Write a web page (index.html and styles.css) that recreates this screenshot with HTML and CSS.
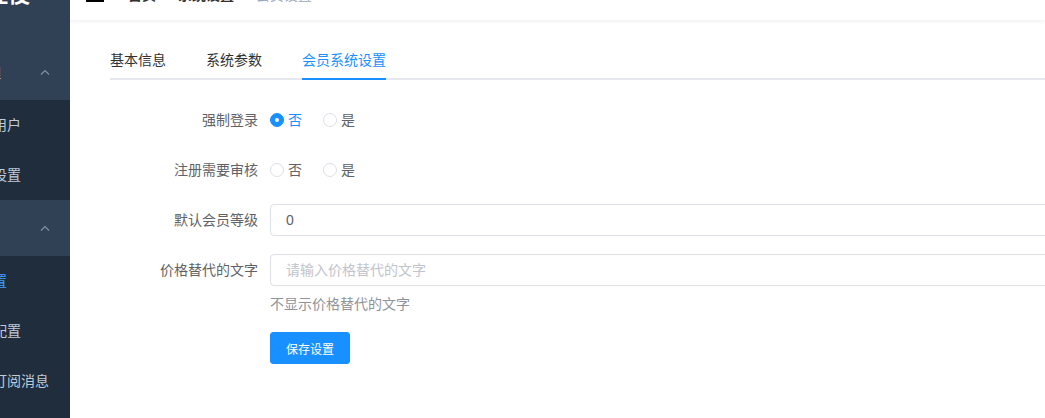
FILE: index.html
```html
<!DOCTYPE html>
<html lang="zh-CN">
<head>
<meta charset="utf-8">
<title>会员系统设置</title>
<link rel="stylesheet" href="styles.css">
</head>
<body>
<div class="layout">
  <aside class="sidebar">
    <div class="sidebar-inner">
      <div class="logo">商城管理後</div>
      <div class="submenu">
        <div class="submenu-title"><span>会员用户管理</span>
          <svg class="arrow" width="10" height="6" viewBox="0 0 10 6"><polyline points="1,5.5 5,1.5 9,5.5" fill="none" stroke="#8290a3" stroke-width="1.2"/></svg>
        </div>
        <ul class="menu">
          <li>系统管理员用户</li>
          <li>公众号菜单设置</li>
        </ul>
      </div>
      <div class="submenu">
        <div class="submenu-title"><span>系统设置</span>
          <svg class="arrow" width="10" height="6" viewBox="0 0 10 6"><polyline points="1,5.5 5,1.5 9,5.5" fill="none" stroke="#8290a3" stroke-width="1.2"/></svg>
        </div>
        <ul class="menu">
          <li class="active">会员系统设置</li>
          <li>微信公众号配置</li>
          <li>微信小程序订阅消息</li>
          <li>短信通知设置</li>
        </ul>
      </div>
    </div>
  </aside>
  <main class="main">
    <header class="navbar">
      <div class="hamburger">
        <svg width="20" height="20" viewBox="0 0 20 20"><rect x="1" y="3" width="18" height="2" fill="#000"/><rect x="1" y="9" width="18" height="2" fill="#000"/><rect x="1" y="15" width="18" height="2" fill="#000"/></svg>
      </div>
      <nav class="breadcrumb">
        <a class="crumb-link">首页</a><span class="sep">/</span><a class="crumb-link">系统设置</a><span class="sep">/</span><span class="crumb-current">会员设置</span>
      </nav>
    </header>
    <section class="app-main">
      <div class="tabs-header">
        <div class="tab"><span class="tab-label">基本信息</span></div>
        <div class="tab"><span class="tab-label">系统参数</span></div>
        <div class="tab active"><span class="tab-label">会员系统设置</span></div>
      </div>
      <form class="form">
        <div class="form-item">
          <label class="form-label">强制登录</label>
          <div class="form-content row">
            <span class="radio checked"><span class="radio-inner"></span><span class="radio-label">否</span></span>
            <span class="radio"><span class="radio-inner"></span><span class="radio-label">是</span></span>
          </div>
        </div>
        <div class="form-item">
          <label class="form-label">注册需要审核</label>
          <div class="form-content row">
            <span class="radio"><span class="radio-inner"></span><span class="radio-label">否</span></span>
            <span class="radio"><span class="radio-inner"></span><span class="radio-label">是</span></span>
          </div>
        </div>
        <div class="form-item">
          <label class="form-label">默认会员等级</label>
          <div class="form-content">
            <input class="input" type="text" value="0">
          </div>
        </div>
        <div class="form-item">
          <label class="form-label">价格替代的文字</label>
          <div class="form-content">
            <input class="input" type="text" placeholder="请输入价格替代的文字">
            <div class="help">不显示价格替代的文字</div>
          </div>
        </div>
        <div class="form-item">
          <div class="form-label"></div>
          <div class="form-content">
            <button type="button" class="btn-primary">保存设置</button>
          </div>
        </div>
      </form>
    </section>
  </main>
</div>
</body>
</html>
```
FILE: styles.css
```css
html, body {
  margin: 0;
  padding: 0;
  background: #fff;
  overflow: hidden;
}
body {
  font-family: "Liberation Sans", "Noto Sans CJK SC", sans-serif;
  -webkit-font-smoothing: antialiased;
}
.layout {
  display: flex;
  height: 418px;
}

/* sidebar */
.sidebar {
  width: 70px;
  flex: none;
  background: #304156;
  overflow: hidden;
}
.sidebar-inner {
  width: 200px;
  margin-left: -130px;
  margin-top: -30px;
}
.logo {
  height: 74px;
  line-height: 50px;
  box-sizing: border-box;
  text-align: right;
  padding-right: 40px;
  color: #fff;
  font-weight: 700;
  font-size: 22px;
  white-space: nowrap;
}
.submenu-title {
  height: 56px;
  display: flex;
  align-items: center;
  justify-content: space-between;
  padding: 0 20px 0 47px;
  color: #bfcbd9;
  font-size: 14px;
  white-space: nowrap;
}
.menu {
  list-style: none;
  margin: 0;
  padding: 0;
  background: #1f2d3d;
}
.menu li {
  height: 50px;
  line-height: 50px;
  padding-left: 53px;
  color: #bfcbd9;
  font-size: 14px;
  white-space: nowrap;
}
.menu li.active {
  color: #409eff;
}

/* main */
.main {
  flex: 1;
  min-width: 0;
  overflow: hidden;
  display: flex;
  flex-direction: column;
}
.navbar {
  height: 50px;
  flex: none;
  margin-top: -30px;
  background: #fff;
  box-shadow: 0 1px 4px rgba(0, 21, 41, 0.08);
  display: flex;
  align-items: center;
  position: relative;
  z-index: 1;
}
.hamburger {
  padding: 0 15px;
  display: flex;
  align-items: center;
}
.breadcrumb {
  margin-left: 8px;
  font-size: 14px;
  line-height: 50px;
  white-space: nowrap;
}
.crumb-link {
  color: #303133;
  font-weight: 700;
}
.sep {
  margin: 0 9px;
  color: #c0c4cc;
  font-weight: 700;
}
.crumb-current {
  color: #97a8be;
}

.app-main {
  padding: 20px 0 20px 40px;
}
.tabs-header {
  display: flex;
  height: 40px;
  box-shadow: inset 0 -2px 0 #e4e7ed;
  margin-bottom: 15px;
}
.tab {
  padding: 0 20px;
  height: 40px;
  line-height: 40px;
  font-size: 14px;
  color: #303133;
  white-space: nowrap;
}
.tab:first-child { padding-left: 0; }
.tab:last-child { padding-right: 0; }
.tab-label {
  display: block;
  height: 40px;
}
.tab.active { color: #1890ff; }
.tab.active .tab-label {
  box-shadow: inset 0 -2px 0 #1890ff;
}

/* form */
.form {
  padding-top: 9px;
}
.form-item {
  display: flex;
  margin-bottom: 18px;
}
.form-label {
  width: 160px;
  flex: none;
  box-sizing: border-box;
  padding-right: 12px;
  text-align: right;
  line-height: 32px;
  font-size: 14px;
  color: #606266;
}
.form-content {
  flex: 1;
  min-width: 0;
  line-height: 32px;
  font-size: 14px;
  display: flex;
  flex-direction: column;
  align-items: flex-start;
}
.form-content.row {
  flex-direction: row;
  align-items: center;
}
.radio {
  display: inline-flex;
  align-items: center;
  margin-right: 21px;
  color: #606266;
  height: 32px;
}
.radio-inner {
  width: 14px;
  height: 14px;
  box-sizing: border-box;
  border: 1px solid #dcdfe6;
  border-radius: 50%;
  background: #fff;
  display: flex;
  align-items: center;
  justify-content: center;
}
.radio-label {
  padding-left: 4px;
}
.radio.checked { color: #1890ff; }
.radio.checked .radio-inner {
  background: #1890ff;
  border-color: #1890ff;
}
.radio.checked .radio-inner::after {
  content: "";
  width: 4px;
  height: 4px;
  border-radius: 50%;
  background: #fff;
}
.input {
  width: 900px;
  height: 32px;
  box-sizing: border-box;
  border: 1px solid #dcdfe6;
  border-radius: 4px;
  padding: 0 15px;
  font-size: 14px;
  font-family: inherit;
  color: #606266;
  outline: none;
  background: #fff;
}
.input::placeholder {
  color: #c0c4cc;
}
.help {
  margin-top: 8px;
  line-height: 20px;
  color: #909399;
  font-size: 14px;
}
.btn-primary {
  height: 32px;
  padding: 0 15px;
  border: 1px solid #1890ff;
  border-radius: 3px;
  background: #1890ff;
  color: #fff;
  font-size: 12px;
  font-family: inherit;
}
```
